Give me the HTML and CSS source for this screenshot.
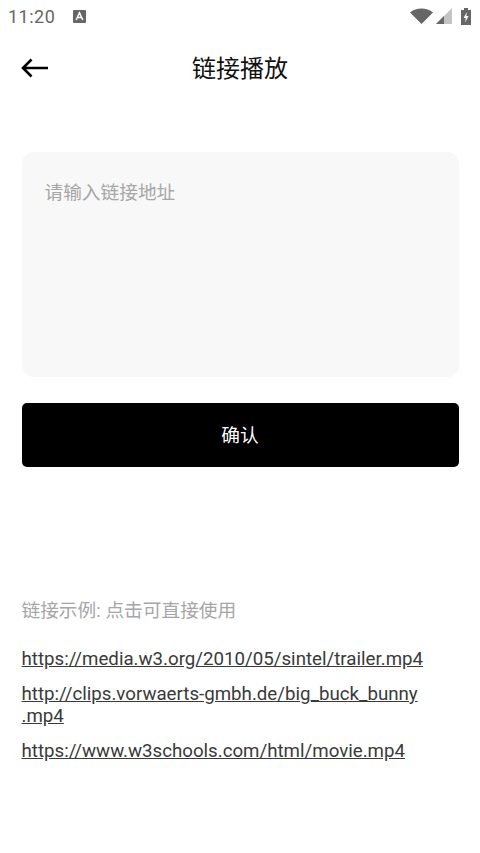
FILE: index.html
```html
<!DOCTYPE html>
<html lang="zh">
<head>
    <meta charset="UTF-8">
    <meta name="viewport" content="width=device-width, initial-scale=1.0">
    <title>链接播放</title>
    <link rel="stylesheet" href="styles.css">
</head>
<body>

<div class="status-bar">
    <span class="time">11:20</span>
    <svg class="status-a" width="13" height="13" viewBox="0 0 13 13">
        <rect x="0" y="0" width="13" height="13" rx="1" fill="#666666"/>
        <path d="M3.2 10 L6.5 2.8 L9.8 10 M4.5 7.6 H8.5" fill="none" stroke="#ffffff" stroke-width="1.5"/>
    </svg>
    <span class="status-right">
        <svg width="23" height="16" viewBox="0 0 23 16"><path d="M0 4.5 C6 -1 17 -1 23 4.5 L11.5 16 Z" fill="#666666"/></svg>
        <svg width="16" height="16" viewBox="0 0 16 16">
            <path d="M16 0 V16 H0 Z" fill="#c4c4c4"/>
            <path d="M8 8 V16 H0 Z" fill="#666666"/>
        </svg>
        <svg width="10" height="17" viewBox="0 0 10 17">
            <path d="M3 0 H7 V2 H10 V17 H0 V2 H3 Z" fill="#666666"/>
            <path d="M5.8 4 L2.6 10 H4.7 L4.2 14.5 L7.5 8 H5.3 Z" fill="#ffffff"/>
        </svg>
    </span>
</div>

<div class="top-bar">
    <svg class="back" width="28" height="20" viewBox="0 0 28 20">
        <path d="M27 10 H2 M10.5 1.5 L2 10 L10.5 18.5" fill="none" stroke="#000000" stroke-width="2.6"/>
    </svg>
    <h1>链接播放</h1>
</div>

<div class="form">
    <div class="link-input">请输入链接地址</div>
    <button class="confirm-btn">确认</button>
</div>

<div class="examples">
    <p class="examples-title">链接示例: 点击可直接使用</p>
    <a class="example-link">https://media.w3.org/2010/05/sintel/trailer.mp4</a>
    <a class="example-link">http://clips.vorwaerts-gmbh.de/big_buck_bunny<br>.mp4</a>
    <a class="example-link">https://www.w3schools.com/html/movie.mp4</a>
</div>

</body>
</html>
```

FILE: styles.css
```css
body {
    margin: 0;
    height: 853px;
    overflow: hidden;
    background-color: #ffffff;
    font-family: Roboto, "Noto Sans CJK SC", sans-serif;
    color: #333333;
}
.status-bar {
    display: flex;
    align-items: center;
    height: 32px;
    padding: 0 9px 0 8px;
    color: #666666;
}
.time {
    font-size: 18px;
    letter-spacing: 0.5px;
}
.status-a {
    margin-left: 18px;
}
.status-right {
    display: flex;
    align-items: center;
    gap: 3px;
    margin-left: auto;
}
.status-right svg:last-child {
    margin-left: 6px;
}
.top-bar {
    position: relative;
    height: 72px;
    margin-top: -2px;
    display: flex;
    align-items: center;
    justify-content: center;
}
.top-bar h1 {
    margin: 0;
    font-size: 24px;
    font-weight: 400;
    color: #111111;
}
.back {
    position: absolute;
    left: 21px;
    top: 28px;
}
.form {
    padding: 50px 21.5px 0 21.5px;
}
.link-input {
    height: 225px;
    box-sizing: border-box;
    padding: 27px 23px;
    background-color: #f8f8f8;
    border-radius: 12px;
    font-size: 18.7px;
    line-height: 28px;
    color: #a6a6a6;
}
.confirm-btn {
    display: block;
    width: 100%;
    height: 64px;
    margin-top: 26px;
    padding: 0 0 4px 0;
    border: none;
    border-radius: 5px;
    background-color: #000000;
    color: #ffffff;
    font-family: inherit;
    font-size: 18.7px;
}
.examples {
    padding: 131px 21.5px 0 21.5px;
}
.examples-title {
    margin: 0 0 24px 0;
    font-size: 18.7px;
    line-height: 26px;
    color: #a6a6a6;
}
.example-link {
    display: block;
    margin-bottom: 13px;
    font-size: 18.7px;
    line-height: 22px;
    color: #3a3a3a;
    text-decoration: underline;
}
```
